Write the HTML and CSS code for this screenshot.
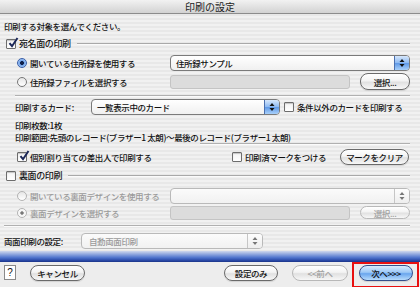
FILE: index.html
```html
<!DOCTYPE html>
<html lang="ja">
<head>
<meta charset="utf-8">
<title>印刷の設定</title>
<link rel="stylesheet" href="styles.css">
</head>
<body>
<div class="win">
  <div class="titlebar">印刷の設定</div>
  <div class="content">
    <div class="intro">印刷する対象を選んでください。</div>

    <div class="grouphead">
      <span class="cb on"><svg viewBox="0 0 12 12" width="12" height="12"><path d="M2.5 6.2 L5 9.2 L10.5 1" fill="none" stroke="#1b2758" stroke-width="2"/></svg></span>
      <span class="gl">宛名面の印刷</span>
      <span class="rule"></span>
    </div>

    <div class="optrow r1">
      <span class="opt"><span class="radio on"></span>開いている住所録を使用する</span>
      <div class="popup"><span class="pv">住所録サンプル</span><span class="arr"><svg viewBox="0 0 8 12" width="8" height="12"><path d="M4 2 L6.5 5 H1.5 Z M4 10 L6.5 7 H1.5 Z" fill="#111"/></svg></span></div>
    </div>

    <div class="optrow r2">
      <span class="opt"><span class="radio"></span>住所録ファイルを選択する</span>
      <div class="ctl"><div class="field"></div><button class="btn sel">選択...</button></div>
    </div>

    <div class="sep s1"></div>

    <div class="cardrow">
      <span class="clabel">印刷するカード:</span>
      <div class="popup cp"><span class="pv">一覧表示中のカード</span><span class="arr"><svg viewBox="0 0 8 12" width="8" height="12"><path d="M4 2 L6.5 5 H1.5 Z M4 10 L6.5 7 H1.5 Z" fill="#111"/></svg></span></div>
      <span class="cb"></span>
      <span class="cl">条件以外のカードを印刷する</span>
    </div>

    <div class="info i1">印刷枚数:1枚</div>
    <div class="info">印刷範囲:先頭のレコード(ブラザー1 太朗)〜最後のレコード(ブラザー1 太朗)</div>
    <div class="sep s2"></div>

    <div class="markrow">
      <span class="cb on"><svg viewBox="0 0 12 12" width="12" height="12"><path d="M2.5 6.2 L5 9.2 L10.5 1" fill="none" stroke="#1b2758" stroke-width="2"/></svg></span>
      <span class="ml">個別割り当ての差出人で印刷する</span>
      <span class="grow"></span>
      <span class="cb"></span>
      <span class="ml">印刷済マークをつける</span>
      <button class="btn clr">マークをクリア</button>
    </div>

    <div class="grouphead g2">
      <span class="cb"></span>
      <span class="gl">裏面の印刷</span>
      <span class="rule"></span>
    </div>

    <div class="optrow r3 dis">
      <span class="opt"><span class="radio"></span>開いている裏面デザインを使用する</span>
      <div class="popup off"><span class="pv"></span><span class="arr"><svg viewBox="0 0 8 12" width="8" height="12"><path d="M4 2 L6.5 5 H1.5 Z M4 10 L6.5 7 H1.5 Z" fill="#777"/></svg></span></div>
    </div>

    <div class="optrow r4 dis">
      <span class="opt"><span class="radio dot"></span>裏面デザインを選択する</span>
      <div class="ctl"><div class="field"></div><button class="btn sel off">選択...</button></div>
    </div>

    <div class="sep s3"></div>

    <div class="duprow">
      <span class="dl">両面印刷の設定:</span>
      <div class="popup off dp"><span class="pv">自動両面印刷</span><span class="arr"><svg viewBox="0 0 8 12" width="8" height="12"><path d="M4 2 L6.5 5 H1.5 Z M4 10 L6.5 7 H1.5 Z" fill="#777"/></svg></span></div>
    </div>
  </div>
  <div class="bluebar"></div>
  <div class="footer">
    <span class="help">?</span>
    <button class="btn cancel">キャンセル</button>
    <span class="grow"></span>
    <button class="btn only">設定のみ</button>
    <button class="btn prev off">&lt;&lt;前へ</button>
    <button class="btn next">次へ&gt;&gt;&gt;</button>
  </div>
  <div class="mark"></div>
</div>
</body>
</html>
```

FILE: styles.css
```css
* { box-sizing: border-box; }
html, body { margin: 0; padding: 0; }
body {
  width: 420px;
  height: 287px;
  overflow: hidden;
  font-family: "Noto Sans CJK JP", "Noto Sans", sans-serif;
  font-size: 8.5px;
  font-weight: 500;
  letter-spacing: -0.4px;
  color: #111;
}
.win {
  position: relative;
  display: flex;
  flex-direction: column;
  height: 287px;
  background: repeating-linear-gradient(to bottom, #f1f1f1 0 2px, #e8e8e8 2px 4px);
}
.titlebar {
  height: 14px;
  flex: none;
  border-bottom: 1px solid #8c8c8c;
  background: linear-gradient(#f2f2f2, #d2d2d2);
  text-align: center;
  font-size: 10px;
  font-weight: 400;
  line-height: 13px;
  letter-spacing: 0;
  color: #222;
}
.content {
  flex: 1;
  padding: 0 10px 0 4px;
}
.intro { margin-top: 6px; height: 12px; line-height: 12px; }

.grouphead {
  margin-top: 6px;
  height: 12px;
  display: flex;
  align-items: center;
  padding-left: 2px;
}
.gl { margin-left: 3px; line-height: 12px; font-size: 9px; }
.rule {
  flex: 1;
  height: 2px;
  margin-left: 6px;
  border-top: 1px solid #a9a9a9;
  border-bottom: 1px solid #fbfbfb;
}
.g2 { margin-top: 5px; }

.cb {
  position: relative;
  flex: none;
  width: 10px;
  height: 10px;
  border: 1px solid #6d6d6d;
  border-radius: 1px;
  background: linear-gradient(#f4f4f4, #ffffff);
  box-shadow: inset 0 1px 1px rgba(0,0,0,0.2);
}
.cb svg { position: absolute; left: 0; top: -3px; }

.radio {
  flex: none;
  width: 10px;
  height: 10px;
  border-radius: 50%;
  border: 1px solid #777;
  background: linear-gradient(#e6e6e6, #ffffff);
  margin-right: 3px;
  position: relative;
}
.radio.on {
  border-color: #3b5fa8;
  background: radial-gradient(circle at 50% 50%, #10204a 0 1.8px, #6fa2ea 2.2px, #b9d5f7 5px);
}
.radio.dot {
  background: radial-gradient(circle at 50% 50%, #777 0 1.4px, #f2f2f2 1.9px, #ffffff 5px);
  border-color: #aaa;
}
.dis .radio { border-color: #b3b3b3; }

.optrow {
  display: grid;
  grid-template-columns: 153px 1fr;
  align-items: center;
  padding-left: 13px;
}
.opt { display: flex; align-items: center; line-height: 12px; }
.r1 { margin-top: 5px; height: 16px; }
.r2 { margin-top: 2px; height: 17px; }
.r3 { margin-top: 6px; height: 16px; }
.r4 { margin-top: 1px; height: 15px; }
.dis { color: #9a9a9a; }

.popup {
  height: 16px;
  display: flex;
  align-items: center;
  border: 1px solid #7a7a7a;
  border-radius: 4px;
  background: linear-gradient(#ffffff, #f0f0f0);
  overflow: hidden;
}
.pv { flex: 1; padding-left: 5px; line-height: 14px; }
.arr {
  flex: none;
  width: 15px;
  height: 100%;
  border-left: 1px solid #4a6fae;
  background: linear-gradient(#d7e7fb, #8ab8f2 50%, #5d97e6 51%, #a8d0fa);
  display: flex;
  align-items: center;
  justify-content: center;
}
.popup.off { border-color: #b9b9b9; color: #9a9a9a; background: linear-gradient(#fbfbfb, #f1f1f1); }
.popup.off .arr { border-left-color: #c6c6c6; background: linear-gradient(#fdfdfd, #eeeeee); }

.ctl { display: flex; align-items: center; }
.field {
  width: 180px;
  height: 14px;
  border: 1px solid #c4c4c4;
  border-radius: 3px;
  background: #dcdcdc;
}
.btn {
  font: inherit;
  letter-spacing: inherit;
  color: #111;
  height: 16px;
  padding: 0;
  border: 1px solid #6a6a6a;
  border-radius: 8px;
  background: linear-gradient(#ffffff, #f3f3f3 45%, #e1e1e1 55%, #f7f7f7);
  display: flex;
  align-items: center;
  justify-content: center;
  line-height: 14px;
  box-shadow: 0 1px 1px rgba(0,0,0,0.12);
}
.btn.off { color: #a0a0a0; border-color: #b8b8b8; box-shadow: none; }
.btn.sel { width: 50px; height: 17px; margin-left: 10px; }
.r4 .btn.sel { height: 13px; }
.r4 .field { height: 14px; }

.sep {
  height: 2px;
  border-top: 1px solid #b0b0b0;
  border-bottom: 1px solid #fbfbfb;
}
.s1 { margin: 5px 0 0 11px; }
.s2 { margin: 0 0 0 196px; }
.s3 { margin: 5px 0 0 0; }

.cardrow {
  margin-top: 2px;
  height: 16px;
  display: flex;
  align-items: center;
  padding-left: 11px;
}
.clabel { width: 76px; flex: none; }
.popup.cp { width: 189px; flex: none; }
.cardrow .cb { margin-left: 4px; }
.cl { margin-left: 3px; }

.info { padding-left: 11px; height: 12px; line-height: 12px; }
.i1 { margin-top: 4px; }

.markrow {
  margin-top: 4px;
  height: 16px;
  display: flex;
  align-items: center;
  padding-left: 13px;
}
.ml { margin-left: 3px; }
.grow { flex: 1; }
.btn.clr { width: 69px; margin-left: 14px; margin-right: 1px; }

.duprow {
  margin-top: 6px;
  height: 16px;
  display: flex;
  align-items: center;
}
.dl { width: 77px; flex: none; }
.popup.dp { width: 182px; }
.popup.dp .pv { padding-left: 7px; }

.bluebar {
  flex: none;
  height: 11px;
  background: linear-gradient(#cfd8ec 0, #8ea6de 30%, #4f74cc 60%, #2a4aa8 85%, #1c3488 100%);
}
.footer {
  flex: none;
  height: 25px;
  display: flex;
  align-items: flex-start;
  padding: 3px 7px 0 4px;
  background: #ededed;
}
.help {
  width: 12px;
  height: 15px;
  border: 1px solid #8a8a8a;
  background: #fff;
  text-align: center;
  line-height: 13px;
  font-size: 10px;
  letter-spacing: 0;
  font-family: "Liberation Sans", sans-serif;
}
.btn.cancel { width: 55px; margin-left: 14px; }
.btn.only { width: 54px; }
.btn.prev { width: 56px; margin-left: 14px; }
.btn.next {
  width: 54px;
  margin-left: 11px;
  border-color: #35508c;
  background: linear-gradient(#d9ebfe, #9cc8f6 45%, #6aa6ee 55%, #b8dcfc);
}
.mark {
  position: absolute;
  left: 352px;
  top: 262px;
  width: 67px;
  height: 26px;
  border: 2px solid #e81010;
}
```
